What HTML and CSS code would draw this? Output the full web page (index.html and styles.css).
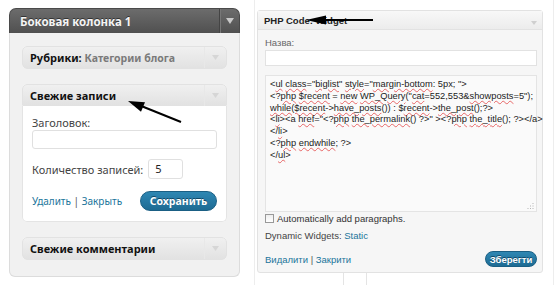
FILE: index.html
```html
<!DOCTYPE html>
<html lang="ru">
<head>
<meta charset="utf-8">
<title>Widgets</title>
<link rel="stylesheet" href="styles.css">
</head>
<body>
<div class="page">
  <section class="sidebar">
    <div class="sb-head">
      <span class="sb-title">Боковая колонка 1</span>
      <span class="sb-toggle"><svg width="8" height="6" viewBox="0 0 8 6"><path d="M0 0H8L4 6Z" fill="#c9c9c9"/></svg></span>
    </div>
    <div class="sb-body">
      <div class="widget">
        <div class="w-head">
          <span class="w-title"><b>Рубрики:</b> <span class="w-in">Категории блога</span></span>
          <span class="w-toggle"><svg width="7" height="5" viewBox="0 0 7 5"><path d="M0 0H7L3.5 5Z" fill="#d6d6d6"/></svg></span>
        </div>
      </div>
      <div class="widget open">
        <div class="w-head">
          <span class="w-title"><b>Свежие записи</b></span>
          <span class="w-toggle"><svg width="7" height="5" viewBox="0 0 7 5"><path d="M0 0H7L3.5 5Z" fill="#d6d6d6"/></svg></span>
        </div>
        <div class="w-body">
          <label class="lbl">Заголовок:</label>
          <div class="inp"></div>
          <div class="row-num"><span class="lbl">Количество записей:</span><span class="num">5</span></div>
          <div class="actions">
            <span class="links"><a>Удалить</a> <span class="sep">|</span> <a>Закрыть</a></span>
            <span class="btn">Сохранить</span>
          </div>
        </div>
      </div>
      <div class="widget">
        <div class="w-head">
          <span class="w-title"><b>Свежие комментарии</b></span>
          <span class="w-toggle"><svg width="7" height="5" viewBox="0 0 7 5"><path d="M0 0H7L3.5 5Z" fill="#d6d6d6"/></svg></span>
        </div>
      </div>
    </div>
  </section>

  <section class="area">
    <div class="pw">
      <div class="pw-head">
        <span class="pw-title">PHP Code: Widget</span>
        <span class="pw-toggle"><svg width="6" height="4" viewBox="0 0 6 4"><path d="M0 0H6L3 4Z" fill="#cfcfcf"/></svg></span>
      </div>
      <div class="pw-body">
        <div class="pw-lbl">Назва:</div>
        <div class="pw-inp"></div>
        <div class="code">
          <div>&lt;<span class="sp">ul</span> <span class="sp">class</span>="<span class="sp">biglist</span>" <span class="sp">style</span>="<span class="sp">margin-bottom</span>: 5px; "&gt;</div>
          <div>&lt;?<span class="sp">php</span> <span class="sp">$recent</span> = <span class="sp">new</span> <span class="sp">WP_Query</span>("<span class="sp">cat</span>=552,553&amp;<span class="sp">showposts</span>=5");</div>
          <div><span class="sp">while($recent</span>-&gt;<span class="sp">have_posts</span>()) : $<span class="sp">recent</span>-&gt;<span class="sp">the_post</span>();?&gt;</div>
          <div>&lt;<span class="sp">li</span>&gt;&lt;a <span class="sp">href</span>="&lt;?<span class="sp">php</span> <span class="sp">the_permalink</span>() ?&gt;" &gt;&lt;?<span class="sp">php</span> <span class="sp">the_title</span>(); ?&gt;&lt;/a&gt;</div>
          <div>&lt;/<span class="sp">li</span>&gt;</div>
          <div>&lt;?<span class="sp">php</span> <span class="sp">endwhile</span>; ?&gt;</div>
          <div>&lt;/<span class="sp">ul</span>&gt;</div>
          <span class="grip"><svg width="7" height="7" viewBox="0 0 7 7"><path d="M6 1V2M6 3.5V4.5M6 6V7M3.5 3.5V4.5M3.5 6V7M1 6V7" stroke="#b5b5b5" stroke-width="1"/></svg></span>
        </div>
        <div class="chk"><span class="box"></span>Automatically add paragraphs.</div>
        <div class="dyn">Dynamic Widgets: <a>Static</a></div>
        <div class="pw-actions">
          <span class="links"><a>Видалити</a> <span class="sep">|</span> <a>Закрити</a></span>
          <span class="btn small">Зберегти</span>
        </div>
      </div>
    </div>
    <div class="tab"></div>
  </section>
</div>

<svg class="arrows" width="560" height="285" viewBox="0 0 560 285">
  <line x1="181" y1="122" x2="140" y2="105.5" stroke="#000" stroke-width="2"/>
  <polygon points="128,101 145,102.2 141,111.8" fill="#000"/>
  <line x1="322" y1="20" x2="373" y2="20" stroke="#000" stroke-width="2"/>
  <polygon points="306,20 326,15.5 326,24.5" fill="#000"/>
</svg>
</body>
</html>
```

FILE: styles.css
```css
* { box-sizing: border-box; }
html, body { margin: 0; padding: 0; }
body {
  width: 560px;
  height: 285px;
  overflow: hidden;
  background: #fff;
  position: relative;
  font-family: "Noto Sans", "DejaVu Sans", sans-serif;
  color: #333;
}
a { color: #21759b; text-decoration: none; }

.page {
  display: flex;
  align-items: flex-start;
}

/* ---------- left sidebar ---------- */
.sidebar {
  width: 231px;
  margin: 8px 0 0 9px;
}
.sb-head {
  height: 25px;
  display: flex;
  align-items: center;
  justify-content: space-between;
  background: linear-gradient(#6c6c6c, #505050);
  border-radius: 7px 7px 0 0;
  border: 1px solid #4a4a4a;
  border-bottom: none;
  padding-left: 10px;
}
.sb-title {
  color: #f4f4f4;
  font-size: 11.5px;
  font-weight: bold;
  text-shadow: 0 -1px 0 #333;
}
.sb-toggle {
  width: 20px;
  height: 24px;
  display: flex;
  align-items: center;
  justify-content: center;
  border-left: 1px solid #444;
  box-shadow: inset 1px 0 0 #777;
}
.sb-body {
  height: 244px;
  background: #f1f1f1;
  border: 1px solid #dcdcdc;
  border-top: none;
  border-radius: 0 0 6px 6px;
  padding: 13px 12px 0 12px;
  display: flex;
  flex-direction: column;
  gap: 15px;
}
.widget {
  border-radius: 5px;
  background: #fff;
}
.w-head {
  height: 23px;
  display: flex;
  align-items: center;
  justify-content: space-between;
  background: linear-gradient(#f0f0f0, #e2e2e2);
  border: 1px solid #e2e2e2;
  border-radius: 5px;
  padding-left: 7px;
}
.widget.open .w-head { border-radius: 5px 5px 0 0; height: 22px; }
.w-title {
  font-size: 11px;
  color: #111;
}
.w-title b { font-weight: bold; }
.w-in { color: #7a7a7a; font-weight: bold; font-size: 10.5px; }
.w-toggle {
  width: 22px;
  height: 21px;
  display: flex;
  align-items: center;
  justify-content: center;
  border-left: 1px solid #e8e8e8;
}
.w-body {
  border: 1px solid #e4e4e4;
  border-top: none;
  border-radius: 0 0 5px 5px;
  padding: 10px 9px 9px 9px;
  height: 116px;
}
.lbl {
  display: block;
  font-size: 11px;
  line-height: 13px;
  color: #444;
}
.inp {
  height: 19px;
  margin-top: 1px;
  border: 1px solid #e0e0e0;
  border-radius: 3px;
  background: #fff;
}
.row-num {
  display: flex;
  align-items: center;
  gap: 5px;
  margin-top: 10px;
}
.num {
  width: 35px;
  height: 20px;
  border: 1px solid #e0e0e0;
  border-radius: 3px;
  font-size: 11px;
  line-height: 13px;
  padding: 2px 0 0 6px;
  color: #222;
}
.actions {
  display: flex;
  align-items: center;
  justify-content: space-between;
  margin-top: 12px;
}
.links { font-size: 10px; }
.sep { color: #555; }
.btn {
  display: inline-flex;
  align-items: center;
  justify-content: center;
  width: 77px;
  height: 20px;
  border-radius: 10px;
  background: linear-gradient(#2e87b3, #1e6b93);
  border: 1px solid #1a5f84;
  color: #fff;
  font-weight: bold;
  font-size: 10.5px;
  text-shadow: 0 -1px 0 #114766;
}

/* ---------- right area ---------- */
.area {
  position: relative;
  width: 300px;
  height: 285px;
  margin-left: 14px;
  border-left: 1px solid #ededed;
  border-right: 1px solid #ededed;
  padding: 10px 10px 0 2px;
  font-family: "Liberation Sans", Arial, sans-serif;
}
.pw {
  width: 286px;
  border: 1px solid #e2e2e2;
  border-radius: 3px;
  background: #f6f6f6;
}
.pw-head {
  height: 19px;
  display: flex;
  align-items: center;
  justify-content: space-between;
  background: linear-gradient(#f8f8f8, #ececec);
  border-bottom: 1px solid #e2e2e2;
  padding: 0 5px 0 6px;
}
.pw-title {
  font-size: 9.5px;
  font-weight: bold;
  color: #222;
}
.pw-body {
  padding: 7px 5px 5px 7px;
}
.pw-lbl {
  font-size: 9.5px;
  color: #666;
  line-height: 12px;
}
.pw-inp {
  height: 16px;
  margin-top: 1px;
  border: 1px solid #e2e2e2;
  background: #fff;
}
.code {
  position: relative;
  height: 137px;
  margin-top: 9px;
  border: 1px solid #e4e4e4;
  background: #fafafa;
  padding: 3px 4px;
  font-size: 9.3px;
  line-height: 11.8px;
  color: #222;
  white-space: nowrap;
}
.sp {
  text-decoration: underline wavy rgba(225, 60, 60, 0.75);
  text-decoration-thickness: 1px;
  text-underline-offset: 1px;
}
.grip {
  position: absolute;
  right: 2px;
  bottom: 2px;
  display: flex;
}
.chk {
  display: flex;
  align-items: center;
  gap: 3px;
  margin-top: 0;
  font-size: 9.5px;
  color: #333;
  height: 12px;
}
.box {
  width: 9px;
  height: 9px;
  border: 1px solid #999;
  background: linear-gradient(#eee, #fff);
}
.dyn {
  margin-top: 6px;
  font-size: 9.5px;
  color: #444;
}
.pw-actions {
  display: flex;
  align-items: center;
  justify-content: space-between;
  margin-top: 10px;
}
.pw-actions .links { font-size: 9.5px; }
.btn.small {
  width: 52px;
  height: 16px;
  font-size: 9.5px;
  border-radius: 8px;
}
.tab {
  width: 24px;
  height: 14px;
  margin-left: 86px;
  border-left: 1px solid #e4e4e4;
  border-right: 1px solid #e4e4e4;
}

/* ---------- annotation arrows ---------- */
.arrows {
  position: absolute;
  left: 0;
  top: 0;
  pointer-events: none;
}
```
